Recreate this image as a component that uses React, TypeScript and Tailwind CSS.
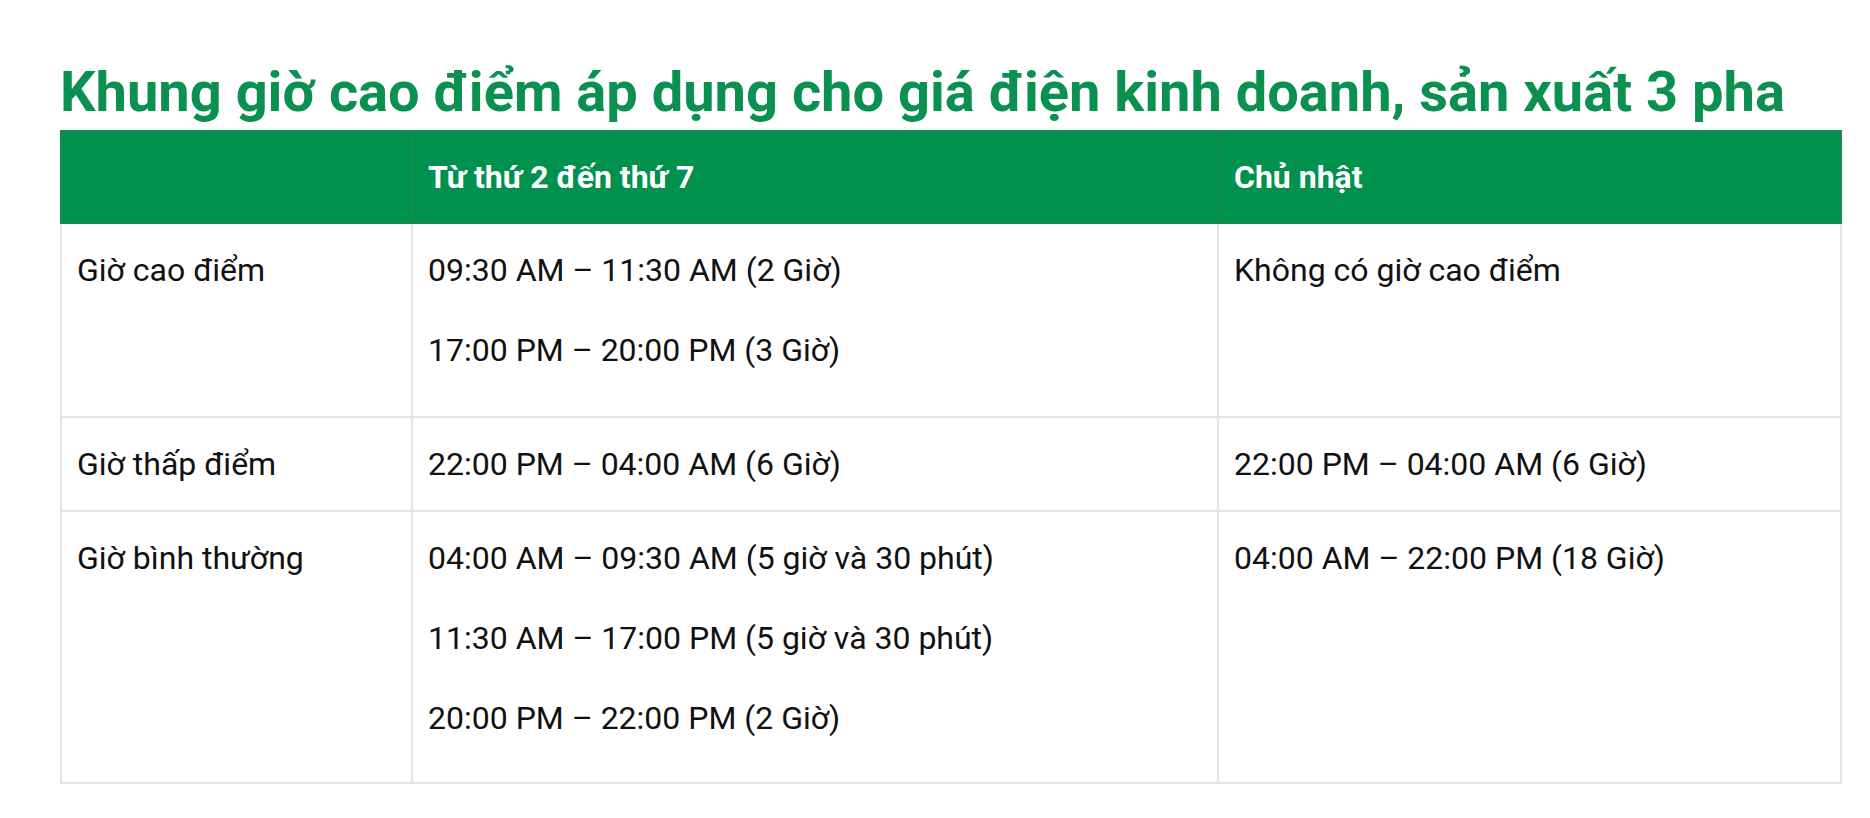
const rows = [
  {
    label: "Giờ cao điểm",
    weekday: ["09:30 AM – 11:30 AM (2 Giờ)", "17:00 PM – 20:00 PM (3 Giờ)"],
    sunday: ["Không có giờ cao điểm"],
    extra: "pb-[20px]",
  },
  {
    label: "Giờ thấp điểm",
    weekday: ["22:00 PM – 04:00 AM (6 Giờ)"],
    sunday: ["22:00 PM – 04:00 AM (6 Giờ)"],
    extra: "",
  },
  {
    label: "Giờ bình thường",
    weekday: [
      "04:00 AM – 09:30 AM (5 giờ và 30 phút)",
      "11:30 AM – 17:00 PM (5 giờ và 30 phút)",
      "20:00 PM – 22:00 PM (2 Giờ)",
    ],
    sunday: ["04:00 AM – 22:00 PM (18 Giờ)"],
    extra: "pb-[18px]",
  },
];

function Lines({ items, extra = "" }: { items: string[]; extra?: string }) {
  return (
    <div className={`flex flex-col gap-8 ${extra}`}>
      {items.map((t, i) => (
        <p key={i} className="leading-[48px]">
          {t}
        </p>
      ))}
    </div>
  );
}

export default function App() {
  return (
    <div className="min-h-screen w-full bg-white pl-[60px] pr-[30px] pt-[59px] font-['Roboto','Liberation_Sans',sans-serif]">
      <h1 className="mb-[5px] text-[56px] font-bold leading-[66px] text-[#0a914f]">
        Khung giờ cao điểm áp dụng cho giá điện kinh doanh, sản xuất 3 pha
      </h1>
      <table className="w-[1780px] table-fixed border-collapse border-2 border-[#e3e3e3] text-[32px] text-[#111111]">
        <colgroup>
          <col className="w-[351px]" />
          <col className="w-[806px]" />
          <col className="w-[623px]" />
        </colgroup>
        <thead>
          <tr className="h-[92px] bg-[#00914f] text-left text-white">
            <th className="border-2 border-[#168a4f] px-[15px] font-bold"></th>
            <th className="border-2 border-[#168a4f] px-[15px] font-bold leading-[48px]">Từ thứ 2 đến thứ 7</th>
            <th className="border-2 border-[#168a4f] px-[15px] font-bold leading-[48px]">Chủ nhật</th>
          </tr>
        </thead>
        <tbody>
          {rows.map((r) => (
            <tr key={r.label}>
              <td className="border-2 border-[#e3e3e3] px-[15px] pt-[22px] pb-[22px] align-top">
                <Lines items={[r.label]} />
              </td>
              <td className="border-2 border-[#e3e3e3] px-[15px] pt-[22px] pb-[22px] align-top">
                <Lines items={r.weekday} extra={r.extra} />
              </td>
              <td className="border-2 border-[#e3e3e3] px-[15px] pt-[22px] pb-[22px] align-top">
                <Lines items={r.sunday} />
              </td>
            </tr>
          ))}
        </tbody>
      </table>
    </div>
  );
}
